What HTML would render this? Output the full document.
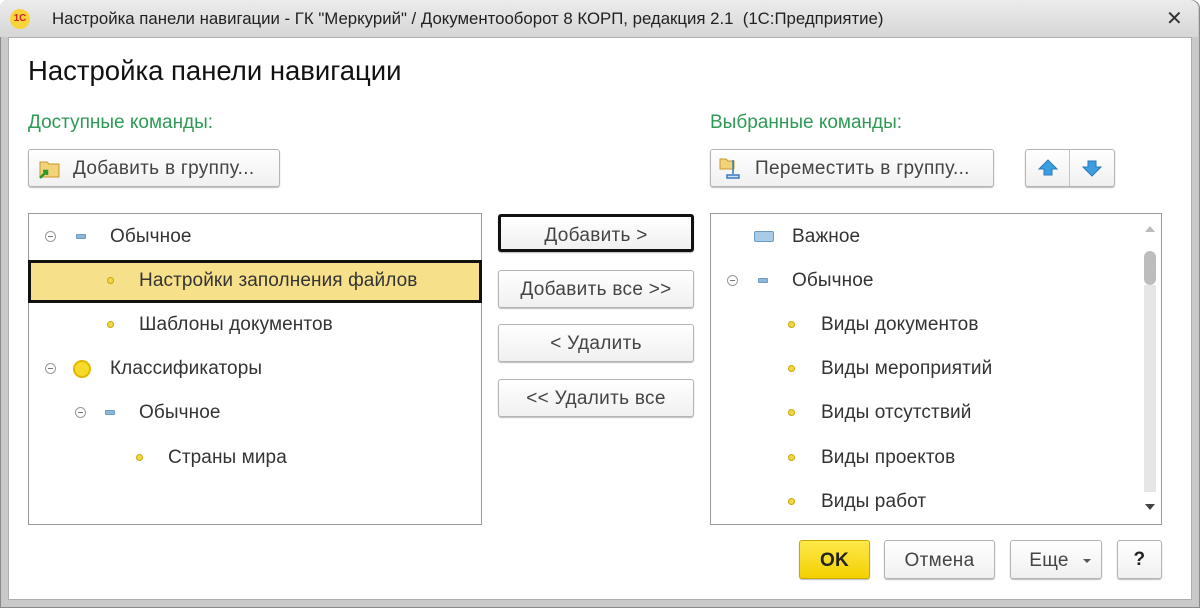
<!DOCTYPE html>
<html><head><meta charset="utf-8"><style>
*{margin:0;padding:0;box-sizing:border-box}
body{width:1200px;height:608px;background:#fff;font-family:"Liberation Sans",sans-serif;position:relative;overflow:hidden;color:#333}
.win{position:absolute;left:0;top:0;width:1200px;height:608px;background:#c9c9c9;border:1px solid #8a8a8a;border-radius:8px 8px 0 0}
.title{position:absolute;left:0;top:0;width:1198px;height:37px;background:linear-gradient(#ececec,#d6d6d6);border-radius:8px 8px 0 0}
.client{position:absolute;left:8px;top:37px;width:1184px;height:563px;background:#fff;border:1px solid #b0b0b0}
.a{position:absolute;white-space:nowrap}
.btn{position:absolute;border:1px solid #b4b4b4;border-radius:3px;background:linear-gradient(#fff,#f0f0f0);box-shadow:0 1px 1px #bbb;font-size:19px;letter-spacing:0.3px;color:#444;text-align:center;white-space:nowrap}
.box{position:absolute;border:1px solid #9a9a9a;background:#fff}
.row{position:absolute;font-size:19px;letter-spacing:0.1px;color:#333;white-space:nowrap}
.dot{position:absolute;width:7px;height:7px;border-radius:50%;background:#f2d64a;border:1px solid #c9a800}
.min{position:absolute;width:11px;height:11px;border:1px solid #999;border-radius:50%}
.min:after{content:"";position:absolute;left:2px;top:4px;width:5px;height:1px;background:#777}
.bar{position:absolute;width:10px;height:5px;background:#8db6d8;border:1px solid #6a9cc4;border-radius:1px}
</style></head><body>
<div class="win"></div>
<div class="title"></div>
<div class="a" style="left:10px;top:9px;width:20px;height:20px;border-radius:50%;background:#f7d53a;color:#d2232a;font-size:10px;font-weight:bold;text-align:center;line-height:20px">1С</div>
<div class="a" style="left:52px;top:9px;font-size:16.8px;color:#222">Настройка панели навигации - ГК "Меркурий" / Документооборот 8 КОРП, редакция 2.1&nbsp; (1С:Предприятие)</div>
<div class="a" style="left:1166px;top:6px;font-size:20px;color:#333">✕</div>
<div class="client"></div>
<div class="a" style="left:28px;top:55px;font-size:27.5px;color:#111">Настройка панели навигации</div>
<div class="a" style="left:28px;top:112px;font-size:19px;color:#2e9a55">Доступные команды:</div>
<div class="a" style="left:710px;top:112px;font-size:19px;color:#2e9a55">Выбранные команды:</div>

<div class="btn" style="left:28px;top:149px;width:252px;height:38px;text-align:left;padding:8px 0 0 44px">Добавить в группу...</div>
<svg class="a" style="left:38px;top:158px" width="24" height="22"><path d="M2 4h7l2 2h10v13H2z" fill="#f3d27a" stroke="#c49a2a"/><path d="M2 20 L8 14 M5 13h4v4" stroke="#2a9a2a" stroke-width="2.5" fill="none"/></svg>
<div class="btn" style="left:710px;top:149px;width:284px;height:38px;text-align:left;padding:8px 0 0 44px">Переместить в группу...</div>
<svg class="a" style="left:719px;top:156px" width="26" height="24"><path d="M1 3h6l2 2h6v8H1z" fill="#f3d27a" stroke="#c49a2a"/><path d="M14 4v14M8 19h12v3H8z" stroke="#3a7ab8" fill="#cfe2f3" stroke-width="1.5"/></svg>
<div class="btn" style="left:1025px;top:149px;width:90px;height:38px"></div>
<div class="a" style="left:1069px;top:150px;width:1px;height:36px;background:#c4c4c4"></div>
<svg class="a" style="left:1036px;top:158px" width="70" height="20"><path d="M12 2 L21 11 H16 V17 H8 V11 H3z" fill="#3a9ee0" stroke="#2a7ab8"/><path d="M56 18 L65 9 H60 V3 H52 V9 H47z" fill="#3a9ee0" stroke="#2a7ab8"/></svg>

<div class="box" style="left:28px;top:213px;width:454px;height:312px"></div>
<div class="min" style="left:45px;top:231px"></div><div class="bar" style="left:76px;top:234px"></div>
<div class="row" style="left:110px;top:226px">Обычное</div>
<div class="a" style="left:28px;top:260px;width:454px;height:43px;background:#f7e08a;border:3px solid #111"></div>
<div class="dot" style="left:107px;top:277px"></div><div class="row" style="left:139px;top:270px">Настройки заполнения файлов</div>
<div class="dot" style="left:107px;top:321px"></div><div class="row" style="left:139px;top:314px">Шаблоны документов</div>
<div class="min" style="left:45px;top:363px"></div>
<div class="a" style="left:73px;top:360px;width:18px;height:18px;border-radius:50%;background:#f7d92a;border:2px solid #e0b800"></div>
<div class="row" style="left:110px;top:358px">Классификаторы</div>
<div class="min" style="left:75px;top:407px"></div><div class="bar" style="left:105px;top:410px"></div>
<div class="row" style="left:139px;top:402px">Обычное</div>
<div class="dot" style="left:136px;top:454px"></div><div class="row" style="left:168px;top:447px">Страны мира</div>

<div class="btn" style="left:498px;top:214px;width:196px;height:38px;border:3px solid #111;padding-top:8px">Добавить &gt;</div>
<div class="btn" style="left:498px;top:270px;width:196px;height:38px;padding-top:8px">Добавить все &gt;&gt;</div>
<div class="btn" style="left:498px;top:324px;width:196px;height:38px;padding-top:8px">&lt; Удалить</div>
<div class="btn" style="left:498px;top:379px;width:196px;height:38px;padding-top:8px">&lt;&lt; Удалить все</div>

<div class="box" style="left:710px;top:213px;width:452px;height:312px"></div>
<div class="a" style="left:754px;top:231px;width:20px;height:11px;background:#a9cbe8;border:1px solid #6a9cc4;border-radius:2px"></div>
<div class="row" style="left:792px;top:226px">Важное</div>
<div class="min" style="left:727px;top:275px"></div><div class="bar" style="left:758px;top:278px"></div>
<div class="row" style="left:792px;top:270px">Обычное</div>
<div class="dot" style="left:788px;top:321px"></div><div class="row" style="left:821px;top:314px">Виды документов</div>
<div class="dot" style="left:788px;top:365px"></div><div class="row" style="left:821px;top:358px">Виды мероприятий</div>
<div class="dot" style="left:788px;top:409px"></div><div class="row" style="left:821px;top:402px">Виды отсутствий</div>
<div class="dot" style="left:788px;top:454px"></div><div class="row" style="left:821px;top:447px">Виды проектов</div>
<div class="dot" style="left:788px;top:498px"></div><div class="row" style="left:821px;top:491px">Виды работ</div>
<div class="a" style="left:1145px;top:226px;width:0;height:0;border-left:5px solid transparent;border-right:5px solid transparent;border-bottom:6px solid #bbb"></div>
<div class="a" style="left:1144px;top:251px;width:12px;height:34px;background:#bdbdbd;border-radius:6px"></div>
<div class="a" style="left:1144px;top:285px;width:12px;height:207px;background:#e6e6e6"></div>
<div class="a" style="left:1145px;top:504px;width:0;height:0;border-left:5px solid transparent;border-right:5px solid transparent;border-top:6px solid #444"></div>

<div class="btn" style="left:799px;top:540px;width:71px;height:39px;background:linear-gradient(#ffe94a,#f2d000);border-color:#c9a800;font-weight:bold;color:#222;padding-top:9px">OK</div>
<div class="btn" style="left:884px;top:540px;width:111px;height:39px;padding-top:9px">Отмена</div>
<div class="btn" style="left:1010px;top:540px;width:92px;height:39px;padding:9px 14px 0 0">Еще</div>
<div class="a" style="left:1083px;top:559px;border-left:4px solid transparent;border-right:4px solid transparent;border-top:4px solid #555"></div>
<div class="btn" style="left:1117px;top:540px;width:45px;height:39px;padding-top:8px;font-weight:bold;color:#222;font-size:19px">?</div>
</body></html>
